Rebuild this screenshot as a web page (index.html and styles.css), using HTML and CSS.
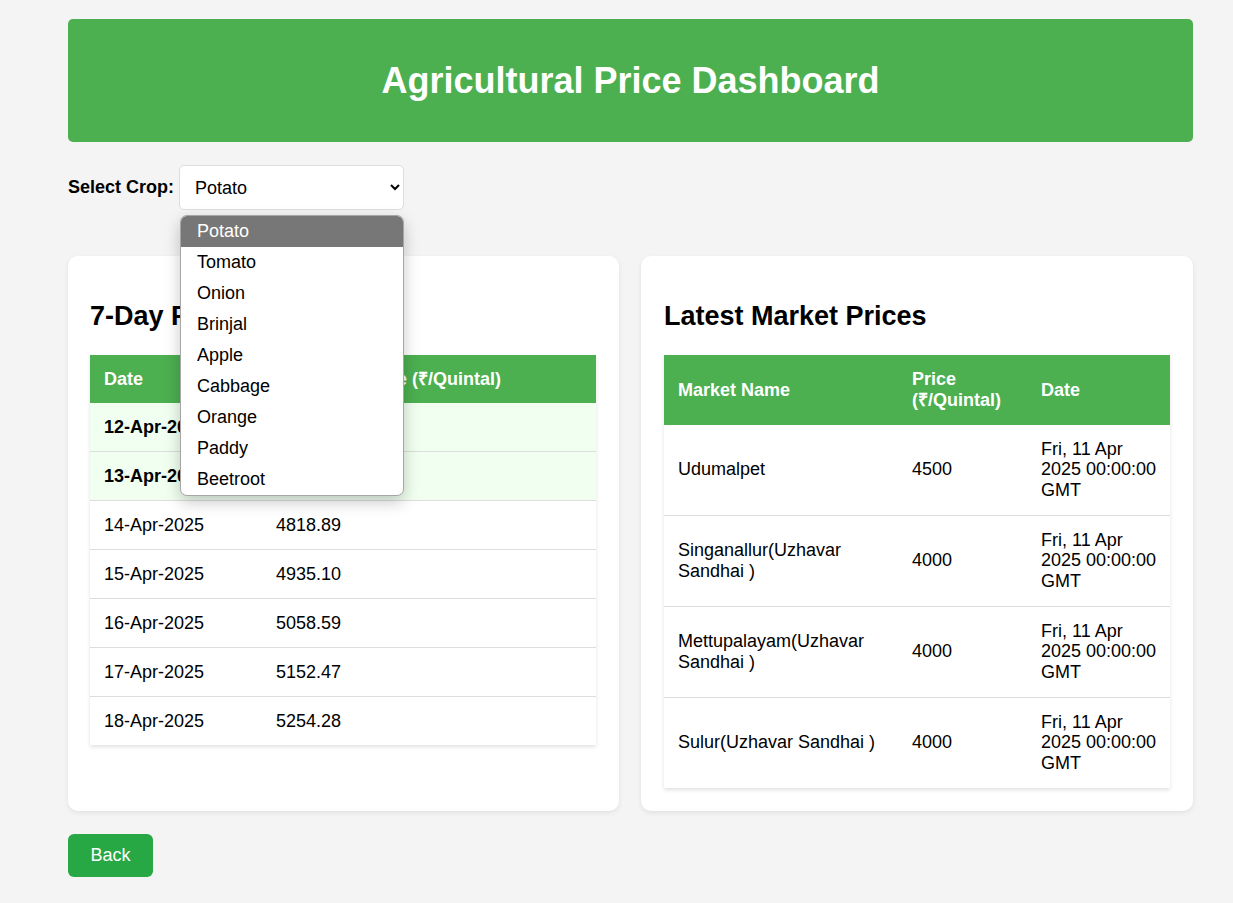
FILE: index.html
```html
<!DOCTYPE html>
<html lang="en">
<head>
<meta charset="utf-8">
<title>Agricultural Price Dashboard</title>
<link rel="stylesheet" href="styles.css">
</head>
<body>
<div class="page">
  <header class="banner">
    <h1>Agricultural Price Dashboard</h1>
  </header>

  <div class="crop-row">
    <label class="crop-label" for="crop">Select Crop:</label>
    <div class="select-wrap">
      <select id="crop" class="crop-select">
        <option>Potato</option>
        <option>Tomato</option>
        <option>Onion</option>
        <option>Brinjal</option>
        <option>Apple</option>
        <option>Cabbage</option>
        <option>Orange</option>
        <option>Paddy</option>
        <option>Beetroot</option>
      </select>
      <ul class="dropdown">
        <li class="dropdown-item is-active">Potato</li>
        <li class="dropdown-item">Tomato</li>
        <li class="dropdown-item">Onion</li>
        <li class="dropdown-item">Brinjal</li>
        <li class="dropdown-item">Apple</li>
        <li class="dropdown-item">Cabbage</li>
        <li class="dropdown-item">Orange</li>
        <li class="dropdown-item">Paddy</li>
        <li class="dropdown-item">Beetroot</li>
      </ul>
    </div>
  </div>

  <div class="cards">
    <section class="card">
      <h2 class="card-title">7-Day Forecast</h2>
      <table class="data-table">
        <colgroup><col class="col-date"><col></colgroup>
        <thead>
          <tr><th>Date</th><th>Predicted Price (₹/Quintal)</th></tr>
        </thead>
        <tbody>
          <tr class="row-hl"><td>12-Apr-2025</td><td>4712.36</td></tr>
          <tr class="row-hl"><td>13-Apr-2025</td><td>4765.04</td></tr>
          <tr><td>14-Apr-2025</td><td>4818.89</td></tr>
          <tr><td>15-Apr-2025</td><td>4935.10</td></tr>
          <tr><td>16-Apr-2025</td><td>5058.59</td></tr>
          <tr><td>17-Apr-2025</td><td>5152.47</td></tr>
          <tr><td>18-Apr-2025</td><td>5254.28</td></tr>
        </tbody>
      </table>
    </section>

    <section class="card">
      <h2 class="card-title">Latest Market Prices</h2>
      <table class="data-table market-table">
        <colgroup><col class="col-market"><col class="col-price"><col></colgroup>
        <thead>
          <tr><th>Market Name</th><th>Price (₹/Quintal)</th><th>Date</th></tr>
        </thead>
        <tbody>
          <tr><td>Udumalpet</td><td>4500</td><td>Fri, 11 Apr 2025 00:00:00 GMT</td></tr>
          <tr><td>Singanallur(Uzhavar Sandhai )</td><td>4000</td><td>Fri, 11 Apr 2025 00:00:00 GMT</td></tr>
          <tr><td>Mettupalayam(Uzhavar Sandhai )</td><td>4000</td><td>Fri, 11 Apr 2025 00:00:00 GMT</td></tr>
          <tr><td>Sulur(Uzhavar Sandhai )</td><td>4000</td><td>Fri, 11 Apr 2025 00:00:00 GMT</td></tr>
        </tbody>
      </table>
    </section>
  </div>

  <div class="actions">
    <button class="back-btn" type="button">Back</button>
  </div>
</div>
</body>
</html>
```

FILE: styles.css
```css
* {
  box-sizing: border-box;
}

html, body {
  margin: 0;
  padding: 0;
  background: #f4f4f4;
}

body {
  font-family: "Liberation Sans", Arial, sans-serif;
  font-size: 18px;
  color: #000;
}

.page {
  padding: 19px 40px 20px 68px;
}

.banner {
  background: #4caf50;
  border-radius: 5px;
  padding: 41px 20px;
  text-align: center;
}

.banner h1 {
  margin: 0;
  font-size: 36px;
  font-weight: bold;
  color: #fff;
  line-height: 41px;
}

.crop-row {
  display: flex;
  align-items: center;
  margin-top: 23px;
}

.crop-label {
  font-weight: bold;
  margin-right: 5px;
}

.select-wrap {
  position: relative;
}

.crop-select {
  width: 225px;
  height: 45px;
  padding: 0 8px 0 11px;
  font-family: "Liberation Sans", Arial, sans-serif;
  font-size: 18px;
  color: #000;
  background: #fff;
  border: 1px solid #ddd;
  border-radius: 5px;
}

.dropdown {
  position: absolute;
  left: 1px;
  top: 50px;
  width: 224px;
  margin: 0;
  padding: 0;
  list-style: none;
  background: #fff;
  border: 1px solid #a6a6a6;
  border-radius: 7px;
  box-shadow: 0 6px 16px rgba(0, 0, 0, 0.22);
  overflow: hidden;
  z-index: 10;
}

.dropdown-item {
  height: 31px;
  line-height: 31px;
  padding: 0 16px;
  font-size: 18px;
  color: #000;
}

.dropdown-item.is-active {
  background: #777;
  color: #fff;
}

.cards {
  display: grid;
  grid-template-columns: 551fr 552fr;
  gap: 22px;
  margin-top: 46px;
}

.card {
  background: #fff;
  border-radius: 10px;
  padding: 22px 23px 23px 22px;
  box-shadow: 0 2px 5px rgba(0, 0, 0, 0.08);
}

.card + .card {
  padding-left: 23px;
}

.card-title {
  margin: 23px 0;
  font-size: 27px;
  line-height: 31px;
  font-weight: bold;
}

.data-table {
  width: 100%;
  border-collapse: collapse;
  table-layout: fixed;
  background: #fff;
  box-shadow: 0 2px 4px rgba(0, 0, 0, 0.12);
}

.col-date {
  width: 172px;
}

.col-market {
  width: 234px;
}

.col-price {
  width: 129px;
}

.data-table th,
.data-table td {
  text-align: left;
  vertical-align: middle;
  padding: 14px 14px 13.5px;
  line-height: 20.5px;
}

.market-table th,
.market-table td {
  padding: 14.25px 10px 14.25px 14px;
}

.data-table th {
  background: #4caf50;
  color: #fff;
  font-weight: bold;
}

.data-table td {
  border-bottom: 1px solid #ddd;
}

.data-table tbody tr:last-child td {
  border-bottom: none;
}

.row-hl td {
  background: #f0fff0;
  font-weight: bold;
}

.actions {
  margin-top: 23px;
}

.back-btn {
  background: #28a745;
  color: #fff;
  border: none;
  border-radius: 6px;
  padding: 11px 22.5px;
  height: 43px;
  font-family: "Liberation Sans", Arial, sans-serif;
  font-size: 18px;
  cursor: pointer;
}
```
